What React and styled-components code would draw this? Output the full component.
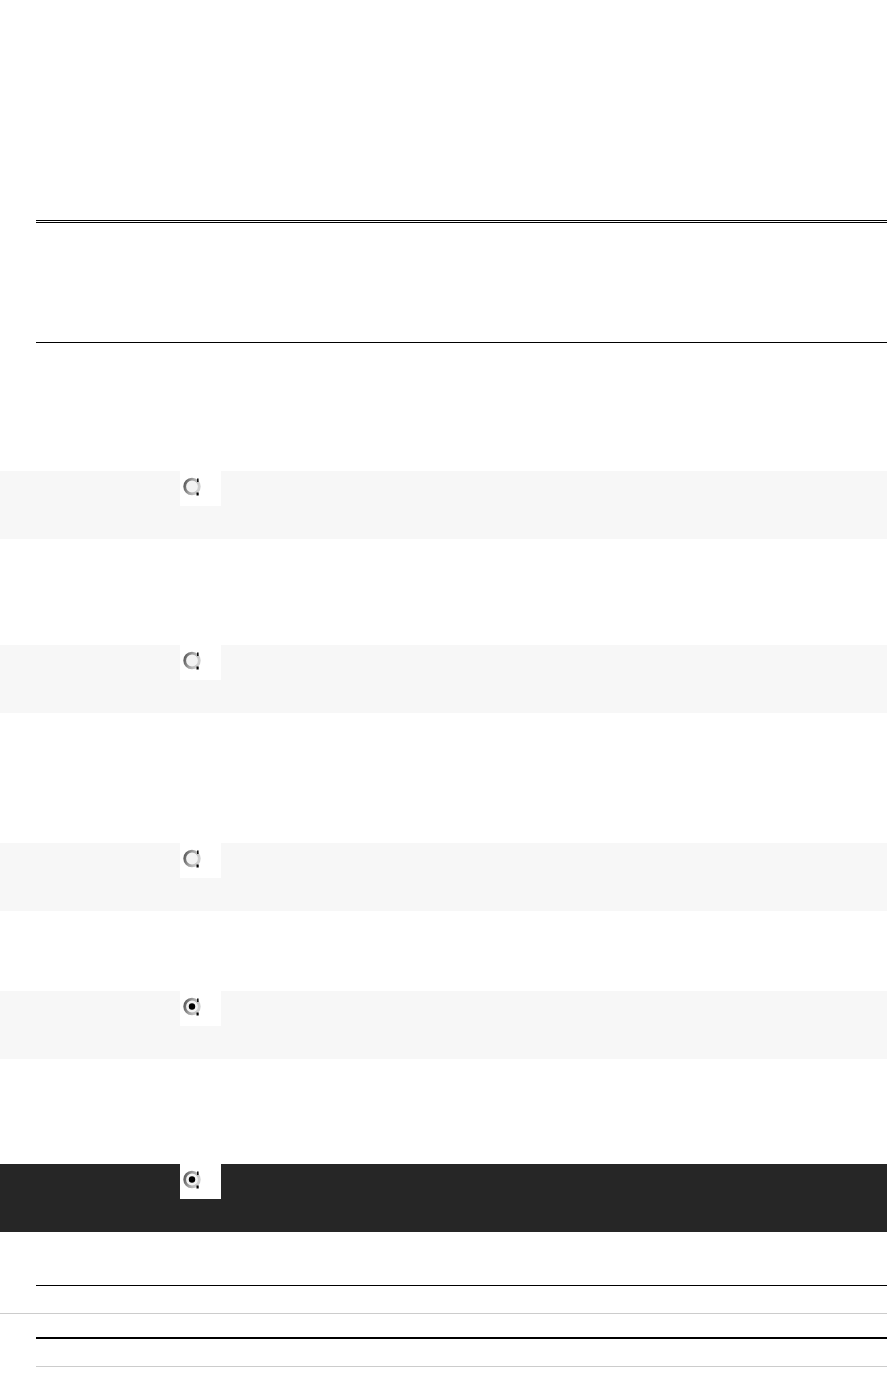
import React from 'react';
import styled, { createGlobalStyle } from 'styled-components';

const GlobalStyle = createGlobalStyle`
  html, body {
    margin: 0;
    padding: 0;
    background: #fff;
    font-family: 'Liberation Sans', Arial, sans-serif;
  }
`;

const Page = styled.main`
  display: flex;
  flex-direction: column;
  padding-top: 220px;
  min-height: 1392px;
  box-sizing: border-box;
`;

const Panel = styled.section`
  margin-left: 36px;
  height: 123px;
  box-sizing: border-box;
  border-top: 3px double #000;
  border-bottom: 1px solid #000;
`;

const Band = styled.div`
  margin-top: ${({ gap }) => gap}px;
  height: 68px;
  background: ${({ dark }) => (dark ? '#262626' : '#f7f7f7')};
  padding-left: 180px;
  display: flex;
  align-items: flex-start;
`;

const RadioBox = styled.span`
  width: 41px;
  height: 35px;
  background: #fff;
  display: flex;
  align-items: flex-start;
  padding: 4px 0 0 2px;
  box-sizing: border-box;
`;

const Rule = styled.div`
  margin-top: ${({ gap }) => gap}px;
  margin-left: ${({ inset }) => (inset ? '36px' : '0')};
  height: 0;
  border-top: ${({ weight }) => weight || 1}px solid ${({ light }) => (light ? '#cccccc' : '#000')};
`;

function RadioIcon({ checked }) {
  return (
    <svg width="22" height="26" viewBox="0 0 22 26">
      <defs>
        <linearGradient id="ring" x1="0" y1="0" x2="1" y2="0.3">
          <stop offset="0" stopColor="#555" />
          <stop offset="0.5" stopColor="#a0a0a0" />
          <stop offset="1" stopColor="#cfcfcf" />
        </linearGradient>
      </defs>
      <circle cx="10" cy="11.5" r="7.3" fill="#f3f3f3" stroke="url(#ring)" strokeWidth="2.8" />
      <rect x="15" y="3.5" width="1.6" height="3.5" fill="#111" />
      <rect x="14.5" y="17.5" width="2.2" height="3" fill="#000" />
      {checked && <circle cx="10" cy="11.5" r="3.2" fill="#000" />}
    </svg>
  );
}

const rows = [
  { gap: 128, checked: false },
  { gap: 106, checked: false },
  { gap: 130, checked: false },
  { gap: 80, checked: true },
  { gap: 105, checked: true, dark: true },
];

export default function App() {
  return (
    <>
      <GlobalStyle />
      <Page>
        <Panel />
        {rows.map((row, i) => (
          <Band key={i} gap={row.gap} dark={row.dark}>
            <RadioBox>
              <RadioIcon checked={row.checked} />
            </RadioBox>
          </Band>
        ))}
        <Rule gap={53} inset />
        <Rule gap={27} light />
        <Rule gap={23} weight={2} inset />
        <Rule gap={27} light inset />
      </Page>
    </>
  );
}
